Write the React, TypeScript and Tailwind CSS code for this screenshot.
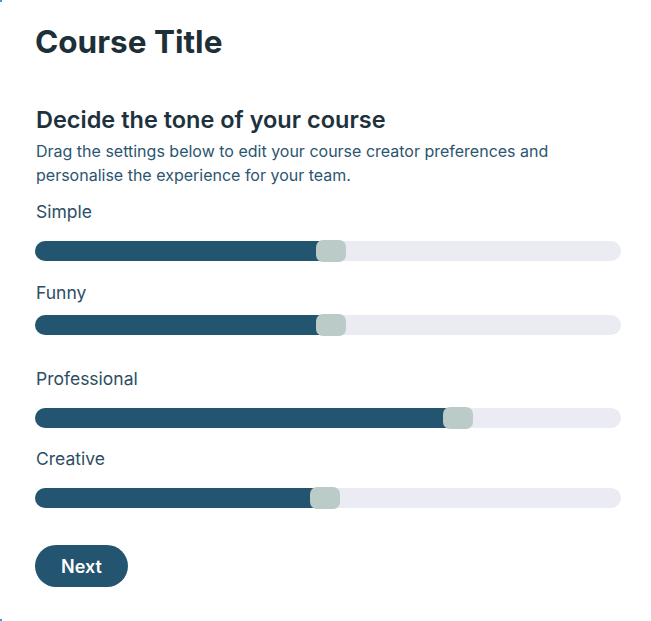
import React from "react";

type Row = { label: string; thumb: number; labelMt: string; trackMt: string };

const rows: Row[] = [
  { label: "Simple", thumb: 281, labelMt: "mt-[13px]", trackMt: "mt-[16px]" },
  { label: "Funny", thumb: 281, labelMt: "mt-[19px]", trackMt: "mt-[9px]" },
  { label: "Professional", thumb: 408, labelMt: "mt-[31px]", trackMt: "mt-[16px]" },
  { label: "Creative", thumb: 275, labelMt: "mt-[18px]", trackMt: "mt-[16px]" },
];

function Slider({ thumb }: { thumb: number }) {
  return (
    <div className="relative h-[22px] w-[586px]">
      <div className="absolute left-0 right-0 top-[1px] h-[20px] rounded-full bg-[#ebebf3]" />
      <div
        className="absolute left-0 top-[1px] h-[20px] rounded-l-full bg-[#235571]"
        style={{ width: thumb + 15 }}
      />
      <div
        className="absolute top-0 h-[22px] w-[30px] rounded-[7px] bg-[#bbcbc8]"
        style={{ left: thumb }}
      />
    </div>
  );
}

export default function App() {
  return (
    <div
      className="relative min-h-[621px] w-[651px] bg-white"
      style={{ fontFamily: "Inter, 'Noto Sans', sans-serif" }}
    >
      <div className="absolute left-0 top-0 h-[2px] w-[2px] bg-[#4a90e2]" />
      <div className="absolute left-0 bottom-0 h-[2px] w-[2px] bg-[#4a90e2]" />
      <div className="flex flex-col items-start px-[35px] pt-[24px]">
        <h1 className="text-[31.5px] font-bold leading-[36px] text-[#1d2f38]">Course Title</h1>
        <h2 className="mt-[45px] pl-[1px] text-[23.5px] font-semibold leading-[30px] text-[#1e323d]">
          Decide the tone of your course
        </h2>
        <p className="mt-[4px] w-[560px] pl-[1px] text-[16px] leading-[24px] text-[#2b5570]">
          Drag the settings below to edit your course creator preferences and personalise the
          experience for your team.
        </p>
        {rows.map((r) => (
          <React.Fragment key={r.label}>
            <div className={`${r.labelMt} pl-[1px] text-[17.5px] leading-[24px] text-[#2c4e64]`}>
              {r.label}
            </div>
            <div className={r.trackMt}>
              <Slider thumb={r.thumb} />
            </div>
          </React.Fragment>
        ))}
        <button className="mt-[36px] h-[42px] w-[93px] rounded-full bg-[#235571] text-[18px] font-semibold text-white">
          Next
        </button>
      </div>
    </div>
  );
}
